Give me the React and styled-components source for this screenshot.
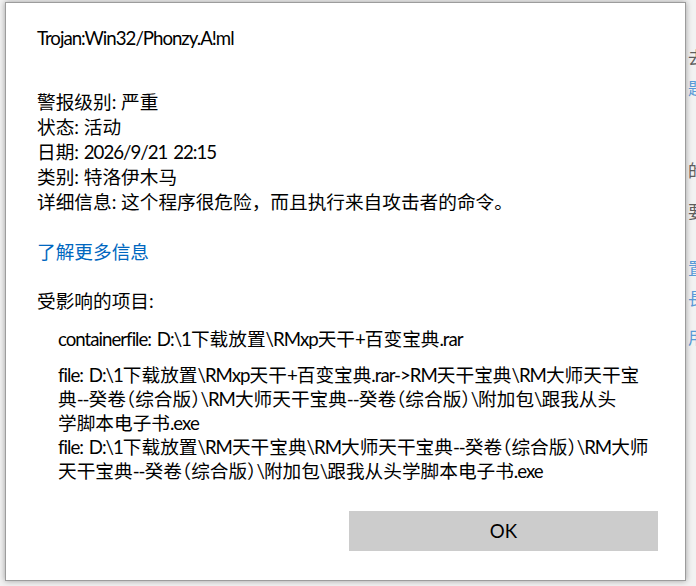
import React from "react";
import styled, { createGlobalStyle } from "styled-components";

const Global = createGlobalStyle`
  html, body {
    margin: 0;
    padding: 0;
    background: #f2f2f2;
  }
  body {
    font-family: Lato, "Noto Sans CJK SC", sans-serif;
    -webkit-font-smoothing: antialiased;
  }
`;

let Desktop = styled.div`
  position: relative;
  width: 696px;
  height: 586px;
  overflow: hidden;
  background: #f2f2f2;
`;

// page behind the dialog, only its left edge peeks out on the right
let BehindPage = styled.div`
  position: absolute;
  top: 0;
  left: 688px;
  width: 60px;
  display: flex;
  flex-direction: column;
  font-family: "Noto Sans CJK SC", sans-serif;
  font-size: 17px;
  line-height: 20px;
`;

let Peek = styled.div`
  margin-top: ${({ gap }) => gap}px;
  color: ${({ link }) => (link ? "#5a9ad8" : "#5e5e5e")};
  white-space: nowrap;
`;

let Dialog = styled.div`
  position: absolute;
  left: 5px;
  top: 2px;
  width: 681px;
  height: 579px;
  background: #ffffff;
  border: 1px solid #9c9c9c;
  box-shadow: 0 0 6px rgba(0, 0, 0, 0.35);
  display: flex;
  flex-direction: column;
  padding: 0 0 0 31px;
  box-sizing: border-box;
  color: #000;
  font-size: 18.67px;
  line-height: 25px;
`;

// Segoe UI is narrower than anything installed, so tighten latin runs
let Latin = styled.span`
  letter-spacing: -1px;
  word-spacing: 2px;
`;

let Title = styled.div`
  margin-top: 23px;
`;

let Details = styled.div`
  margin-top: 39px;
  display: flex;
  flex-direction: column;
`;

let Link = styled.a`
  margin-top: 25px;
  color: #0067c0;
  text-decoration: none;
  cursor: pointer;
  align-self: flex-start;
`;

let Heading = styled.div`
  margin-top: 24px;
`;

let Items = styled.div`
  margin-top: 13px;
  padding-left: 21px;
  display: flex;
  flex-direction: column;
`;

let Item = styled.div`
  margin-top: ${({ spaced }) => (spaced ? "12px" : "0")};
  line-height: 24px;
  font-feature-settings: "halt";
`;

let ItemLine = styled.div`
  white-space: nowrap;
`;

let Footer = styled.div`
  margin-top: auto;
  margin-bottom: 29px;
  display: flex;
  justify-content: flex-end;
  padding-right: 27px;
`;

let Button = styled.button`
  width: 309px;
  height: 40px;
  border: none;
  background: #cccccc;
  font-family: inherit;
  font-size: 18.67px;
  color: #000;
  cursor: pointer;
  &:hover {
    background: #c2c2c2;
  }
`;

let details = [
  "警报级别: 严重",
  "状态: 活动",
  "日期: 2026/9/21 22:15",
  "类别: 特洛伊木马",
  "详细信息: 这个程序很危险，而且执行来自攻击者的命令。",
];

// lines are broken where the dialog wraps them
let items = [
  ["containerfile: D:\\1下载放置\\RMxp天干+百变宝典.rar"],
  [
    "file: D:\\1下载放置\\RMxp天干+百变宝典.rar->RM天干宝典\\RM大师天干宝",
    "典--癸卷（综合版）\\RM大师天干宝典--癸卷（综合版）\\附加包\\跟我从头",
    "学脚本电子书.exe",
  ],
  [
    "file: D:\\1下载放置\\RM天干宝典\\RM大师天干宝典--癸卷（综合版）\\RM大师",
    "天干宝典--癸卷（综合版）\\附加包\\跟我从头学脚本电子书.exe",
  ],
];

let peeks = [
  { t: "去", gap: 47 },
  { t: "题", gap: 11, link: true },
  { t: "的", gap: 62 },
  { t: "要", gap: 21 },
  { t: "置", gap: 37, link: true },
  { t: "長", gap: 10, link: true },
  { t: "用", gap: 19, link: true },
];

function Mixed({ text }) {
  return text
    .split(/([\x20-\x7e]+)/)
    .map((part, i) =>
      /^[\x20-\x7e]+$/.test(part) ? <Latin key={i}>{part}</Latin> : part
    );
}

export default function App() {
  return (
    <Desktop>
      <Global />
      <BehindPage>
        {peeks.map((p, i) => (
          <Peek key={i} gap={p.gap} link={p.link}>
            {p.t}
          </Peek>
        ))}
      </BehindPage>
      <Dialog>
        <Title>
          <Mixed text="Trojan:Win32/Phonzy.A!ml" />
        </Title>
        <Details>
          {details.map((d) => (
            <div key={d}>
              <Mixed text={d} />
            </div>
          ))}
        </Details>
        <Link>了解更多信息</Link>
        <Heading>
          <Mixed text="受影响的项目:" />
        </Heading>
        <Items>
          {items.map((lines, i) => (
            <Item key={i} spaced={i === 1}>
              {lines.map((l) => (
                <ItemLine key={l}>
                  <Mixed text={l} />
                </ItemLine>
              ))}
            </Item>
          ))}
        </Items>
        <Footer>
          <Button>OK</Button>
        </Footer>
      </Dialog>
    </Desktop>
  );
}
